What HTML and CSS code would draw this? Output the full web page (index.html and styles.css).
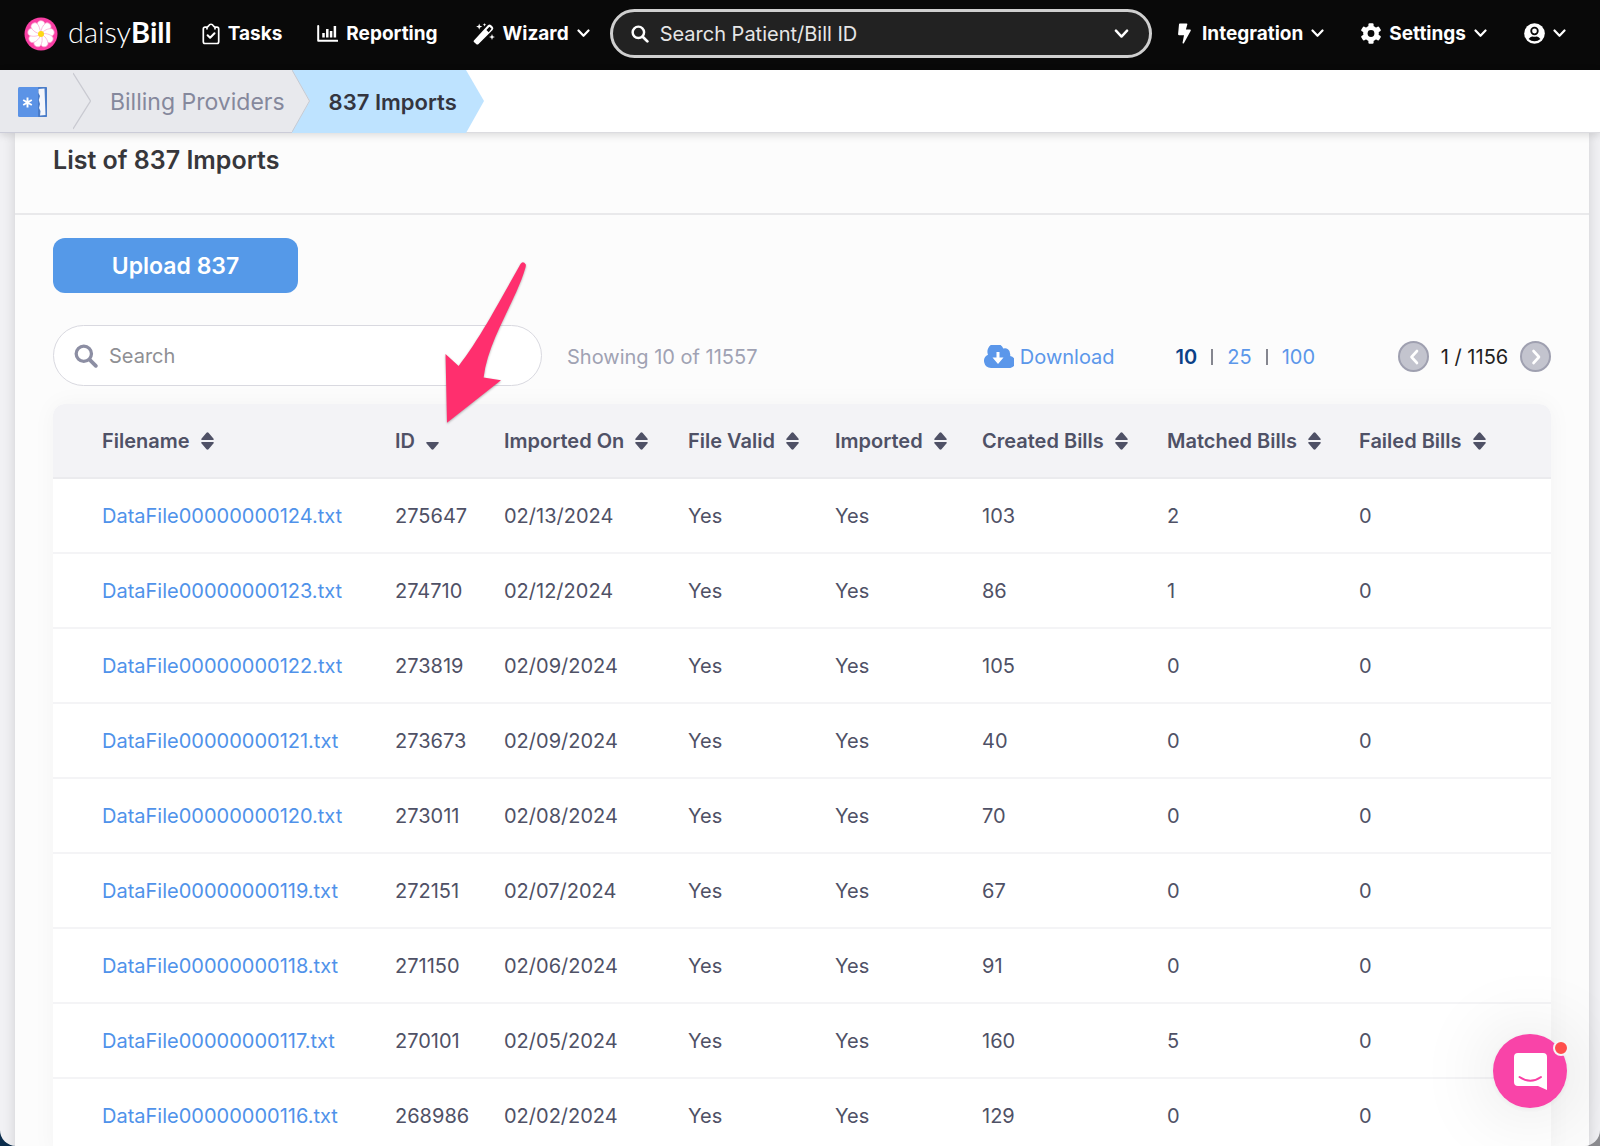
FILE: index.html
```html
<!DOCTYPE html>
<html lang="en">
<head>
<meta charset="utf-8">
<meta name="viewport" content="width=device-width, initial-scale=1">
<title>837 Imports - daisyBill</title>
<link rel="stylesheet" href="styles.css">
</head>
<body>
<svg class="defs" aria-hidden="true">
  <symbol id="chevron" viewBox="0 0 13 9"><path d="M1.5 1.5 6.5 6.8 11.5 1.5" fill="none" stroke="currentColor" stroke-width="2.2" stroke-linecap="round" stroke-linejoin="round"/></symbol>
  <symbol id="glass" viewBox="0 0 22 22"><circle cx="9" cy="9" r="7" fill="none" stroke="currentColor" stroke-width="3"/><path d="M14.3 14.3 20 20" stroke="currentColor" stroke-width="3.4" stroke-linecap="round"/></symbol>
  <symbol id="sort" viewBox="0 0 13 18"><path d="M1 8Q-.4 7.800 .6 6.400L5.500.7Q6.500-.2 7.500.7L12.400 6.400Q13.400 7.800 12 8ZM1 10Q-.4 10.200 .6 11.600L5.500 17.300Q6.500 18.200 7.500 17.300L12.400 11.600Q13.400 10.200 12 10Z" fill="currentColor"/></symbol>
  <symbol id="sort-down" viewBox="0 0 13 18"><path d="M1 10Q-.4 10.200 .6 11.600L5.500 17.300Q6.500 18.200 7.500 17.300L12.400 11.600Q13.400 10.200 12 10Z" fill="currentColor"/></symbol>
</svg>
<div class="app">
  <header class="nav">
    <a class="brand" href="#">
      <svg width="34" height="34" viewBox="-17 -17 34 34" aria-hidden="true">
        <circle r="16.500" fill="#f93fa4"/>
        <g fill="#fff" stroke="#f9a8d2" stroke-width=".7">
          <path id="p" d="M0 0C-3-3-4.500-8-3.300-11.500-2-14 2.500-14 3.600-11 4.500-8 2-4 0 0Z"/>
          <use href="#p" transform="rotate(40)"/><use href="#p" transform="rotate(80)"/><use href="#p" transform="rotate(120)"/><use href="#p" transform="rotate(160)"/><use href="#p" transform="rotate(200)"/><use href="#p" transform="rotate(240)"/><use href="#p" transform="rotate(280)"/><use href="#p" transform="rotate(320)"/>
        </g>
        <circle r="3" fill="#fdd816"/>
      </svg>
      <span class="brand-name">daisy<b>Bill</b></span>
    </a>
    <nav class="menu" aria-label="Main">
      <a class="item" href="#">
        <svg width="18" height="22" viewBox="0 0 18 22" fill="none" stroke="currentColor" stroke-width="1.700" stroke-linejoin="round" stroke-linecap="round" aria-hidden="true"><path d="M5 4.200H3A1.700 1.700 0 0 0 1.300 5.900V18.800A1.700 1.700 0 0 0 3 20.500H15A1.700 1.700 0 0 0 16.700 18.800V5.900A1.700 1.700 0 0 0 15 4.200H13M5 5.800V4.600C5 3.500 6.500 3.800 6.900 2.600 7.500.8 10.500.8 11.100 2.600 11.500 3.800 13 3.500 13 4.600V5.800"/><path d="M5.600 12.300 8.100 14.800 12.500 10.200" stroke-width="2"/></svg>
        <span>Tasks</span></a>
      <a class="item" href="#">
        <svg width="21" height="18" viewBox="0 0 21 18" fill="none" stroke="currentColor" aria-hidden="true"><path d="M1.200 1V15.800H20.500" stroke-width="2" stroke-linejoin="round" stroke-linecap="round"/><path d="M6.500 8V12.500M10.300 4V12.500M14.100 6V12.500M17.900 1V12.500" stroke-width="2.500"/></svg>
        <span>Reporting</span></a>
      <button class="item" type="button">
        <svg width="22" height="22" viewBox="0 0 22 22" fill="currentColor" aria-hidden="true"><path d="M.9 17.600 14.900 2.300Q16.500.7 18.200 2.300L19.700 3.800Q21.100 5.400 19.600 7L5.300 21.200Q4.300 22 3.400 21.200L.9 19.100Q.2 18.300.9 17.600ZM13.400 7 15.700 9.200 18.500 5.700 16.500 3.700Z" fill-rule="evenodd"/><path d="M6.200.5 7 2.800 9.300 3.600 7 4.400 6.200 6.700 5.400 4.400 3.100 3.600 5.400 2.800ZM19 11 19.800 13.200 22 14 19.800 14.800 19 17 18.200 14.800 16 14 18.200 13.200ZM11.500 0 12 1.300 13.300 1.800 12 2.300 11.500 3.600 11 2.300 9.700 1.800 11 1.300Z"/></svg>
        <span>Wizard</span><svg class="chev" width="13" height="9" aria-hidden="true"><use href="#chevron"/></svg></button>
    </nav>
    <label class="finder">
      <svg width="18" height="18" aria-hidden="true"><use href="#glass" width="18" height="18"/></svg>
      <input type="search" placeholder="Search Patient/Bill ID" aria-label="Search Patient/Bill ID">
      <svg width="15" height="10" aria-hidden="true"><use href="#chevron" width="15" height="10"/></svg>
    </label>
    <div class="menu account">
      <button class="item bolt" type="button">
        <svg width="13" height="21" viewBox="0 0 13 21" fill="currentColor" aria-hidden="true"><path d="M1.800.4H8.600Q9.600.4 9.300 1.400L7.900 6.400H12Q13.300 6.600 12.600 7.900L6 20Q5.300 21 4.700 20.300 4.500 20 4.600 19.600L6 12.300H1.200Q0 12.200.1 11L1 1.200Q1.100.4 1.800.4Z"/></svg>
        <span>Integration</span><svg class="chev" width="13" height="9" aria-hidden="true"><use href="#chevron"/></svg></button>
      <button class="item" type="button">
        <svg width="20" height="21" viewBox="-10 -10.500 20 21" aria-hidden="true"><g fill="currentColor"><rect x="-2.600" y="-10.300" width="5.200" height="20.600" rx="1.200"/><rect x="-2.600" y="-10.300" width="5.200" height="20.600" rx="1.200" transform="rotate(60)"/><rect x="-2.600" y="-10.300" width="5.200" height="20.600" rx="1.200" transform="rotate(120)"/><circle r="7.800"/></g><circle r="3.400" fill="#090909"/></svg>
        <span>Settings</span><svg class="chev" width="13" height="9" aria-hidden="true"><use href="#chevron"/></svg></button>
      <button class="item" type="button" aria-label="Account">
        <svg width="21" height="21" viewBox="0 0 21 21" aria-hidden="true"><circle cx="10.500" cy="10.500" r="10.300" fill="currentColor"/><circle cx="10.500" cy="8" r="3.300" fill="none" stroke="#090909" stroke-width="1.800"/><path d="M4.600 16Q6.400 13.300 8.400 13.500 10.500 14.200 12.600 13.500 14.600 13.300 16.400 16 13.900 18.200 10.500 18.200 7.100 18.200 4.600 16Z" fill="#090909"/></svg>
        <svg class="chev" width="13" height="9" aria-hidden="true"><use href="#chevron"/></svg></button>
    </div>
  </header>

  <nav class="crumbs" aria-label="Breadcrumb">
    <a class="crumb home" href="#" aria-label="Home">
      <svg width="29" height="30" viewBox="0 0 29 30" aria-hidden="true"><rect width="29" height="30" rx="1.500" fill="#5b93e6"/><rect x="20" width="9" height="30" rx="1" fill="#4a7cc8"/><path d="M20.500 2 26.500 1.500 27.500 28 22 28.500 22.500 24 21 21 22 17 20.800 13 22 9 20.500 6Z" fill="#f4f6fb"/><path d="M9.500 10.500V20.500M5.200 13 13.800 18M13.800 13 5.200 18" stroke="#fff" stroke-width="1.900"/></svg>
    </a>
    <svg class="tip" width="18" height="62" viewBox="0 0 18 62" aria-hidden="true"><path d="M0 3 17.500 31 0 59" fill="none" stroke="#c9cad1" stroke-width="1.300"/></svg>
    <a class="crumb parent" href="#">Billing Providers</a>
    <svg class="tip over" width="18" height="62" viewBox="0 0 18 62" aria-hidden="true"><path d="M0 0 18 31 0 62Z" fill="#e8e9ed"/><path d="M0 0 17.500 31 0 62" fill="none" stroke="#c5cad3"/></svg>
    <a class="crumb current" href="#" aria-current="page">837 Imports</a>
    <svg class="tip" width="18" height="63" viewBox="0 0 18 63" aria-hidden="true"><path d="M0 0 18 31 0 63Z" fill="#bee3ff"/></svg>
  </nav>

  <main class="page">
    <section class="card">
      <h1 class="title">List of 837 Imports</h1>
      <div class="body">
        <button class="upload" type="button">Upload 837</button>
        <div class="tools">
          <label class="filter">
            <svg width="24" height="24" aria-hidden="true"><use href="#glass" width="24" height="24"/></svg>
            <input type="search" placeholder="Search" aria-label="Search">
          </label>
          <span class="count">Showing 10 of 11557</span>
          <a class="download" href="#">
            <svg width="30" height="23" viewBox="0 0 30 23" aria-hidden="true"><path d="M7 23A7 7 0 0 1 4 9.700 8.200 8.200 0 0 1 19.300 3.600 5 5 0 0 1 26 8.500 4 4 0 0 1 26.200 11 6.100 6.100 0 0 1 24 23Z" fill="#5b97ea"/><path d="M12.500 7H15.500V12.500H19.500L14 19 8.500 12.500H12.500Z" fill="#fff"/></svg>
            Download</a>
          <div class="sizes"><a class="on" href="#">10</a><i></i><a href="#">25</a><i></i><a href="#">100</a></div>
          <div class="pager">
            <button type="button" aria-label="Previous page"><svg width="10" height="16" viewBox="0 0 10 16" aria-hidden="true"><path d="M8 2 2.500 8 8 14" fill="none" stroke="#fff" stroke-width="2.600" stroke-linecap="round" stroke-linejoin="round"/></svg></button>
            <span>1 / 1156</span>
            <button type="button" aria-label="Next page"><svg width="10" height="16" viewBox="0 0 10 16" aria-hidden="true"><path d="M2.500 2 8 8 2.500 14" fill="none" stroke="#fff" stroke-width="2.600" stroke-linecap="round" stroke-linejoin="round"/></svg></button>
          </div>
        </div>
        <table class="grid">
          <colgroup><col class="c-file"><col class="c-id"><col class="c-date"><col class="c-flag"><col class="c-flag"><col class="c-created"><col class="c-num"><col class="c-num"></colgroup>
          <thead><tr>
            <th>Filename<svg width="13" height="18" aria-hidden="true"><use href="#sort"/></svg></th>
            <th>ID<svg width="13" height="18" aria-hidden="true"><use href="#sort-down"/></svg></th>
            <th>Imported On<svg width="13" height="18" aria-hidden="true"><use href="#sort"/></svg></th>
            <th>File Valid<svg width="13" height="18" aria-hidden="true"><use href="#sort"/></svg></th>
            <th>Imported<svg width="13" height="18" aria-hidden="true"><use href="#sort"/></svg></th>
            <th>Created Bills<svg width="13" height="18" aria-hidden="true"><use href="#sort"/></svg></th>
            <th>Matched Bills<svg width="13" height="18" aria-hidden="true"><use href="#sort"/></svg></th>
            <th>Failed Bills<svg width="13" height="18" aria-hidden="true"><use href="#sort"/></svg></th>
          </tr></thead>
          <tbody>
            <tr><td><a href="#">DataFile00000000124.txt</a></td><td>275647</td><td>02/13/2024</td><td>Yes</td><td>Yes</td><td>103</td><td>2</td><td>0</td></tr>
            <tr><td><a href="#">DataFile00000000123.txt</a></td><td>274710</td><td>02/12/2024</td><td>Yes</td><td>Yes</td><td>86</td><td>1</td><td>0</td></tr>
            <tr><td><a href="#">DataFile00000000122.txt</a></td><td>273819</td><td>02/09/2024</td><td>Yes</td><td>Yes</td><td>105</td><td>0</td><td>0</td></tr>
            <tr><td><a href="#">DataFile00000000121.txt</a></td><td>273673</td><td>02/09/2024</td><td>Yes</td><td>Yes</td><td>40</td><td>0</td><td>0</td></tr>
            <tr><td><a href="#">DataFile00000000120.txt</a></td><td>273011</td><td>02/08/2024</td><td>Yes</td><td>Yes</td><td>70</td><td>0</td><td>0</td></tr>
            <tr><td><a href="#">DataFile00000000119.txt</a></td><td>272151</td><td>02/07/2024</td><td>Yes</td><td>Yes</td><td>67</td><td>0</td><td>0</td></tr>
            <tr><td><a href="#">DataFile00000000118.txt</a></td><td>271150</td><td>02/06/2024</td><td>Yes</td><td>Yes</td><td>91</td><td>0</td><td>0</td></tr>
            <tr><td><a href="#">DataFile00000000117.txt</a></td><td>270101</td><td>02/05/2024</td><td>Yes</td><td>Yes</td><td>160</td><td>5</td><td>0</td></tr>
            <tr><td><a href="#">DataFile00000000116.txt</a></td><td>268986</td><td>02/02/2024</td><td>Yes</td><td>Yes</td><td>129</td><td>0</td><td>0</td></tr>
          </tbody>
        </table>
      </div>
      <svg class="pointer" width="90" height="170" viewBox="440 258 90 170" aria-hidden="true"><path d="M447 422.700 445.500 354 458.600 366C480 339 503 295 520.500 264Q523 260.500 525.800 264.500 526 266 525.500 267.500C516 301 488 340 483.600 377.500L501 380.300Z" fill="#ff2f6e"/></svg>
    </section>
  </main>

  <button class="chat" type="button" aria-label="Open chat">
    <svg width="33" height="37" viewBox="0 0 33 37" aria-hidden="true"><path d="M4 0H29Q33 0 33 4V37L24 33H4Q0 33 0 29V4Q0 0 4 0Z" fill="#fff"/><path d="M5.500 24Q16.500 31.500 27 24" fill="none" stroke="#f93fa4" stroke-width="2" stroke-linecap="round"/></svg>
    <span class="dot"></span>
  </button>
</div>
</body>
</html>
```
FILE: styles.css
```css
* { box-sizing: border-box; }

body {
  margin: 0;
  background: linear-gradient(90deg, #0b2d4c 50%, #8b8b8f 50%);
  font-family: Inter, "Liberation Sans", sans-serif;
  font-size: 20px;
  line-height: 24px;
  color: #4f5166;
}

a { color: inherit; text-decoration: none; }
button, input { font: inherit; color: inherit; border: 0; padding: 0; background: none; outline: 0; }
button { cursor: pointer; }
svg { flex: none; }
.defs { display: none; }

.app {
  height: 100vh;
  display: flex;
  flex-direction: column;
  overflow: hidden;
  border-radius: 0 0 16px 16px;
  background: #f1f1f4;
}

/* Top bar */
.nav {
  flex: none;
  display: flex;
  align-items: center;
  height: 70px;
  padding: 0 34px 3px 24px;
  background: #090909;
  color: #fff;
}
.brand { display: flex; align-items: center; gap: 10px; margin-right: 30px; }
.brand-name { padding-bottom: 4px; font-family: Lato, sans-serif; font-size: 29px; line-height: 34px; font-weight: 300; }
.brand-name b { font-weight: 700; }
.menu { display: flex; align-items: center; gap: 35px; }
.menu.account { gap: 37px; }
.item { display: flex; align-items: center; gap: 8px; font-size: 19px; font-weight: 700; white-space: nowrap; }
.item.bolt { gap: 11px; }
.item.bolt .chev { margin-left: -3px; }
.finder {
  flex: 1;
  min-width: 0;
  display: flex;
  align-items: center;
  height: 49px;
  margin: 0 26px 0 20px;
  padding: 0 20px 0 18px;
  border: 3px solid #cfcfcf;
  border-radius: 25px;
  background: #222;
}
.finder input { flex: 1; min-width: 0; margin-left: 11px; }
.finder input::placeholder { color: #e6e6e6; opacity: 1; }

/* Breadcrumb */
.crumbs {
  flex: none;
  position: relative;
  z-index: 1;
  display: flex;
  height: 63px;
  background: #fff;
  border-bottom: 1px solid #dcdce0;
  box-shadow: 0 2px 8px rgba(0, 0, 0, .14);
  font-size: 23px;
}
.crumb { display: flex; align-items: center; height: 63px; white-space: nowrap; }
.home { width: 73px; padding: 2px 0 0 18px; background: #e8e9ed; border-bottom: 1px solid #cbccd8; }
.tip { margin-right: -18px; position: relative; }
.parent { padding: 2px 7px 0 37px; background: #e8e9ed; border-bottom: 1px solid #cbccd8; color: #85889c; }
.over { z-index: 1; }
.current { padding: 0 9px 0 37px; background: #bee3ff; color: #34353f; font-size: 22px; font-weight: 600; }

/* Card */
.page { flex: 1; min-height: 0; overflow: hidden auto; scrollbar-width: none; padding: 0 11px 0 15px; }
.card { position: relative; background: #fcfcfc; box-shadow: 0 0 12px rgba(0, 0, 0, .14); }
.title {
  margin: 0;
  padding: 12px 38px 38px;
  border-bottom: 2px solid #e9e9eb;
  font-size: 25px;
  line-height: 30px;
  font-weight: 600;
  color: #37373b;
}
.body { padding: 23px 38px 0; }
.upload {
  display: block;
  width: 245px;
  height: 55px;
  border-radius: 12px;
  background: #5599e8;
  color: #fff;
  font-size: 23px;
  font-weight: 600;
}
.tools { display: flex; align-items: center; margin: 32px 0 18px; }
.filter {
  display: flex;
  align-items: center;
  width: 489px;
  height: 61px;
  padding: 0 20px;
  border: 1px solid #d9d9e0;
  border-radius: 31px;
  background: #fff;
  color: #8c8ea3;
}
.filter input { flex: 1; min-width: 0; margin-left: 11px; }
.filter input::placeholder { color: #8f8f94; opacity: 1; }
.count, .download, .sizes, .pager { padding-top: 2px; }
.count { margin: 0 auto 0 25px; color: #a0a2b3; }
.download { display: flex; align-items: center; gap: 6px; color: #5b97ea; }
.sizes { display: flex; align-items: center; margin-left: 61px; color: #5b97ea; }
.sizes i { width: 2px; height: 16px; margin: 0 14px; background: #85868f; }
.sizes .on { color: #0b4187; font-weight: 600; }
.pager { display: flex; align-items: center; margin-left: 83px; color: #222; }
.pager span { width: 91px; text-align: center; white-space: nowrap; }
.pager button {
  display: grid;
  place-items: center;
  width: 31px;
  height: 31px;
  border: 2px solid #9fa0b0;
  border-radius: 50%;
  background: #c3c4ce;
}

/* Table */
.grid {
  width: 100%;
  table-layout: fixed;
  border-collapse: separate;
  border-spacing: 0;
  background: #fff;
  border-radius: 12px 12px 0 0;
  box-shadow: 0 0 24px rgba(0, 0, 0, .04);
}
.c-file { width: 342px; }
.c-id { width: 109px; }
.c-date { width: 184px; }
.c-flag { width: 147px; }
.c-created { width: 185px; }
.grid th, .grid td {
  height: 75px;
  padding: 0;
  text-align: left;
  white-space: nowrap;
  border-bottom: 2px solid #f4f4f6;
}
.grid th { background: #f3f3f6; border-color: #ebebee; font-weight: 600; }
.grid th svg { margin-left: 11px; vertical-align: -2px; }
.grid th:first-child, .grid td:first-child { padding-left: 49px; }
.grid th:first-child { border-top-left-radius: 12px; }
.grid th:last-child { border-top-right-radius: 12px; }
.grid td a { color: #4f92ea; }

/* Callout arrow laid over the toolbar */
.pointer { position: absolute; left: 425px; top: 125px; filter: drop-shadow(0 1px 1px rgba(0, 0, 0, .3)); }

/* Chat launcher */
.chat {
  position: fixed;
  right: 33px;
  bottom: 38px;
  display: grid;
  place-items: center;
  width: 74px;
  height: 74px;
  border-radius: 50%;
  background: #f944a8;
  box-shadow: 0 2px 80px rgba(0, 0, 0, .14), 0 1px 6px rgba(0, 0, 0, .06);
}
.dot {
  position: absolute;
  top: 6px;
  right: -2px;
  width: 16px;
  height: 16px;
  border: 2px solid #f6f6f6;
  border-radius: 50%;
  background: #ff4f4c;
}
```
